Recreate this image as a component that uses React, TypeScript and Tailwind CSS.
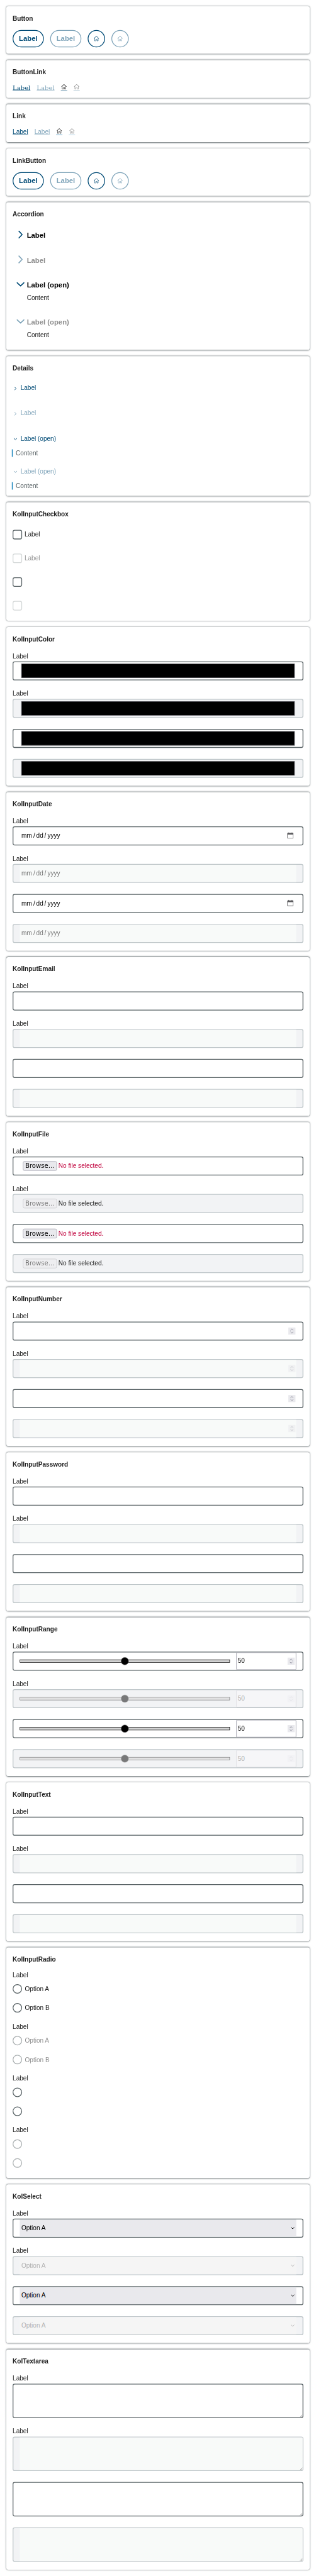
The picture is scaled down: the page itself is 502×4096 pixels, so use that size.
import type { ReactNode } from "react";
import { VscHome } from "react-icons/vsc";

function Card({ title, children }: { title: string; children: ReactNode }) {
  return (
    <section className="flex flex-col gap-4 rounded-[5px] bg-white p-4 shadow-[0_0_4px_#576164]">
      <h2 className="h-7 pt-px text-base/7 font-bold text-[#202020]">{title}</h2>
      {children}
    </section>
  );
}

function Row({ children }: { children: ReactNode }) {
  return <div className="flex items-start gap-4">{children}</div>;
}

function Buttons() {
  return (
    <Row>
      <button className="h-11 w-[79px] rounded-full border-2 border-[#004b76] text-lg/10 font-bold text-[#004b76]">Label</button>
      <button className="h-11 w-[79px] rounded-full border-2 border-[#004b76] text-lg/10 font-bold text-[#004b76] opacity-50">Label</button>
      <button className="flex size-11 items-center justify-center rounded-full border-2 border-[#004b76] text-[#004b76]">
        <VscHome className="size-4" />
      </button>
      <button className="flex size-11 items-center justify-center rounded-full border-2 border-[#004b76] text-[#004b76] opacity-50">
        <VscHome className="size-4" />
      </button>
    </Row>
  );
}

function Chevron({ open, className, width }: { open?: boolean; className: string; width: number }) {
  return (
    <svg viewBox="0 0 24 24" className={className} fill="none" stroke="currentColor" strokeWidth={width} strokeLinecap="round" strokeLinejoin="round">
      <path d={open ? "M3.5 8 L12 16 L20.5 8" : "M8 3.5 L16 12 L8 20.5"} />
    </svg>
  );
}

function AccordionItem({ open, disabled }: { open?: boolean; disabled?: boolean }) {
  return (
    <div className={open ? "h-[78px]" : "h-[47px]"}>
      <div className={disabled ? "flex h-[47px] items-center gap-1 pl-2 opacity-50" : "flex h-[47px] items-center gap-1 pl-2"}>
        <Chevron open={open} className="mb-[3px] size-6 text-[#004b76]" width={2.6} />
        <span className={disabled ? "text-lg/6 font-bold text-[#202020]" : "text-lg/6 font-bold text-black"}>{open ? "Label (open)" : "Label"}</span>
      </div>
      {open && <p className="pl-9 text-base/5 text-[#202020]">Content</p>}
    </div>
  );
}

function DetailsItem({ open, disabled }: { open?: boolean; disabled?: boolean }) {
  return (
    <div className={open ? "h-[67px]" : "h-12"}>
      <div className={disabled ? "flex h-12 items-start gap-2 pt-[11px] pl-0.5 text-[#004b76] opacity-50" : "flex h-12 items-start gap-2 pt-[11px] pl-0.5 text-[#004b76]"}>
        <Chevron open={open} className="mt-[6px] size-[10px]" width={3.6} />
        <span className="text-base/5">{open ? "Label (open)" : "Label"}</span>
      </div>
      {open && <p className="-ml-0.5 h-[19px] border-l-2 border-[#0077b6] pl-2 text-base/[19px] text-[#576164]">Content</p>}
    </div>
  );
}

function Checkbox({ disabled, hideLabel }: { disabled?: boolean; hideLabel?: boolean }) {
  return (
    <div className="flex h-11 items-center gap-1.5">
      <span className={disabled ? "size-6 rounded-[5px] border-2 border-[#d3d7d7] bg-white" : "size-6 rounded-[5px] border-2 border-[#576164] bg-white"} />
      {!hideLabel && <span className={disabled ? "text-base/5 text-[#202020] opacity-50" : "text-base/5 text-[#202020]"}>Label</span>}
    </div>
  );
}

type Inner = (disabled: boolean) => ReactNode;

function Field({ disabled, hideLabel, tall, inner }: { disabled: boolean; hideLabel?: boolean; tall?: boolean; inner: Inner }) {
  return (
    <div className={hideLabel ? "pt-2 pb-1" : "py-1"}>
      {!hideLabel && <div className="mb-1 h-[19px] text-base/[19px] text-[#202020]">Label</div>}
      <div
        className={`${tall ? "h-[87px] pl-4" : "h-12 px-4"} flex rounded-[5px] border-2 ${
          disabled ? "border-[#bcc4c7] bg-[#f2f3f5]" : "border-[#576164] bg-white"
        }`}
      >
        {inner(disabled)}
      </div>
    </div>
  );
}

function FieldCard({ title, tall, inner }: { title: string; tall?: boolean; inner: Inner }) {
  return (
    <Card title={title}>
      <Field disabled={false} tall={tall} inner={inner} />
      <Field disabled tall={tall} inner={inner} />
      <Field disabled={false} hideLabel tall={tall} inner={inner} />
      <Field disabled hideLabel tall={tall} inner={inner} />
    </Card>
  );
}

const plain: Inner = (disabled) => <div className={disabled ? "grow bg-[#f8faf9]" : "grow"} />;

const color: Inner = () => <div className="mx-1 my-1 grow border border-[#77777f] bg-black" />;

const date: Inner = (disabled) => (
  <div className={disabled ? "flex grow items-center bg-[#f8faf9] pr-[5px] pl-1 text-base text-[#777]" : "flex grow items-center pr-[5px] pl-1 text-base text-black"}>
    <span>mm</span>
    <span className="mr-[2.6px] ml-1">/</span>
    <span>dd</span>
    <span className="mr-[3.4px] ml-[3px]">/</span>
    <span className="grow">yyyy</span>
    {!disabled && (
      <svg viewBox="0 0 16 16" className="mr-0.5 mb-0.5 size-4 text-[#5b5b5e]" fill="currentColor">
        <path fillRule="evenodd" d="M3 0h1.7V1.3h6.6V0H13V1.3h1a2 2 0 0 1 2 2V14a2 2 0 0 1-2 2H2a2 2 0 0 1-2-2V3.300a2 2 0 0 1 2-2h1zM1.300 5.700v8.100a.9.9 0 0 0 .9.9h11.600a.9.9 0 0 0 .9-.9V5.700z" />
      </svg>
    )}
  </div>
);

const file: Inner = (disabled) => (
  <div className="flex grow items-center gap-1 pl-2">
    <span
      className={`h-6 w-[86px] rounded-[4px] border text-center font-['DejaVu_Sans'] text-base/[22px] ${
        disabled ? "border-[#c0c0c6] bg-[#eeeef0] text-[#777]" : "border-[#8f8f9d] bg-[#e9e9ed] text-black"
      }`}
    >
      Browse…
    </span>
    <span className={disabled ? "text-base/5 text-[#202020]" : "text-base/5 text-[#c0003c]"}>No file selected.</span>
  </div>
);

function Spinner({ className }: { className: string }) {
  return (
    <span className={`flex size-[18px] items-center justify-center bg-[#e9e9ed] ${className}`}>
      <svg viewBox="0 0 18 18" className="size-[18px] text-[#8f8f9d]" fill="none" stroke="currentColor" strokeWidth="1.5" strokeLinecap="round" strokeLinejoin="round">
        <path d="M6 6.5 L9 3.8 L12 6.5 M6 11.5 L9 14.2 L12 11.5" />
      </svg>
    </span>
  );
}

const number: Inner = (disabled) => (
  <div className={disabled ? "flex grow items-center justify-end bg-[#f8faf9] pr-0.5" : "flex grow items-center justify-end pr-0.5"}>
    <Spinner className={disabled ? "opacity-50" : ""} />
  </div>
);

const range: Inner = (disabled) => (
  <div className="flex grow items-center gap-4">
    <div className={disabled ? "relative flex grow items-center justify-center opacity-50" : "relative flex grow items-center justify-center"}>
      <div className="h-2 grow border border-black bg-[#d3d3d3]" />
      <span className="absolute size-5 rounded-full border border-[#777] bg-black" />
    </div>
    <div
      className={`flex h-11 w-[152px] items-center justify-between rounded-xs border border-[#8f8f9d] bg-white pr-[3px] pl-[3px] text-base text-black ${
        disabled ? "opacity-30" : ""
      }`}
    >
      <span>50</span>
      <Spinner className={disabled ? "opacity-60" : ""} />
    </div>
  </div>
);

const select: Inner = (disabled) => (
  <div className={disabled ? "flex grow items-center justify-between bg-[#f5f5f5] px-1 text-[#b3b3b3]" : "flex grow items-center justify-between bg-[#e9e9ed] px-1 text-black"}>
    <span className="text-base/5">Option A</span>
    <Chevron open className="size-[10px]" width={3.6} />
  </div>
);

const textarea: Inner = (disabled) => (
  <div className={disabled ? "flex grow items-end justify-end bg-[#f8faf9]" : "flex grow items-end justify-end"}>
    <svg viewBox="0 0 8 8" className="size-2 text-[#8a8a8a]" stroke="currentColor" strokeWidth="1">
      <path d="M1.5 7.5 L7.5 1.5 M4 7.5 L7.5 4 M6.3 7.5 L7.5 6.3" />
    </svg>
  </div>
);

function RadioGroup({ disabled, hideLabel }: { disabled?: boolean; hideLabel?: boolean }) {
  return (
    <div className="flex h-[115px] flex-col gap-1">
      <div className="h-[19px] text-base/[19px] text-[#202020]">Label</div>
      {["Option A", "Option B"].map((option) => (
        <div key={option} className={disabled ? "flex h-11 items-center gap-[7px] opacity-50" : "flex h-11 items-center gap-[7px]"}>
          <span className="size-6 rounded-full border-2 border-[#576164]" />
          {!hideLabel && <span className="pt-0.5 text-base/5 text-[#202020]">{option}</span>}
        </div>
      ))}
    </div>
  );
}

export default function App() {
  return (
    <div className="h-[4096px] w-[502px] overflow-hidden bg-white">
      <main className="flex h-[6524px] w-[800px] origin-top-left scale-x-[0.6275] scale-y-[0.62784] flex-col gap-4 p-4 font-['Liberation_Sans',Arial,sans-serif]">
        <Card title="Button">
          <Buttons />
        </Card>
        <Card title="ButtonLink">
          <Row>
            <a className="h-5 font-['DejaVu_Serif',serif] text-base/5 text-[#004b76] underline">Label</a>
            <a className="h-5 font-['DejaVu_Serif',serif] text-base/5 text-[#004b76] underline opacity-50">Label</a>
            <a className="h-[18px] border-b border-[#004b76] text-[#202020]">
              <VscHome className="size-4" />
            </a>
            <a className="h-[18px] border-b border-[#004b76] text-[#202020] opacity-50">
              <VscHome className="size-4" />
            </a>
          </Row>
        </Card>
        <Card title="Link">
          <Row>
            <a className="h-5 text-base/5 text-[#004b76] underline">Label</a>
            <a className="h-5 text-base/5 text-[#004b76] underline opacity-50">Label</a>
            <a className="h-[18px] border-b border-[#0069a8] text-[#202020]">
              <VscHome className="size-4" />
            </a>
            <a className="h-[18px] border-b border-[#0069a8] text-[#202020] opacity-50">
              <VscHome className="size-4" />
            </a>
          </Row>
        </Card>
        <Card title="LinkButton">
          <Buttons />
        </Card>
        <Card title="Accordion">
          <AccordionItem />
          <AccordionItem disabled />
          <AccordionItem open />
          <AccordionItem open disabled />
        </Card>
        <Card title="Details">
          <DetailsItem />
          <DetailsItem disabled />
          <DetailsItem open />
          <DetailsItem open disabled />
        </Card>
        <Card title="KolInputCheckbox">
          <Checkbox />
          <Checkbox disabled />
          <Checkbox hideLabel />
          <Checkbox disabled hideLabel />
        </Card>
        <FieldCard title="KolInputColor" inner={color} />
        <FieldCard title="KolInputDate" inner={date} />
        <FieldCard title="KolInputEmail" inner={plain} />
        <FieldCard title="KolInputFile" inner={file} />
        <FieldCard title="KolInputNumber" inner={number} />
        <FieldCard title="KolInputPassword" inner={plain} />
        <FieldCard title="KolInputRange" inner={range} />
        <FieldCard title="KolInputText" inner={plain} />
        <Card title="KolInputRadio">
          <RadioGroup />
          <RadioGroup disabled />
          <RadioGroup hideLabel />
          <RadioGroup disabled hideLabel />
        </Card>
        <FieldCard title="KolSelect" inner={select} />
        <FieldCard title="KolTextarea" tall inner={textarea} />
      </main>
    </div>
  );
}
